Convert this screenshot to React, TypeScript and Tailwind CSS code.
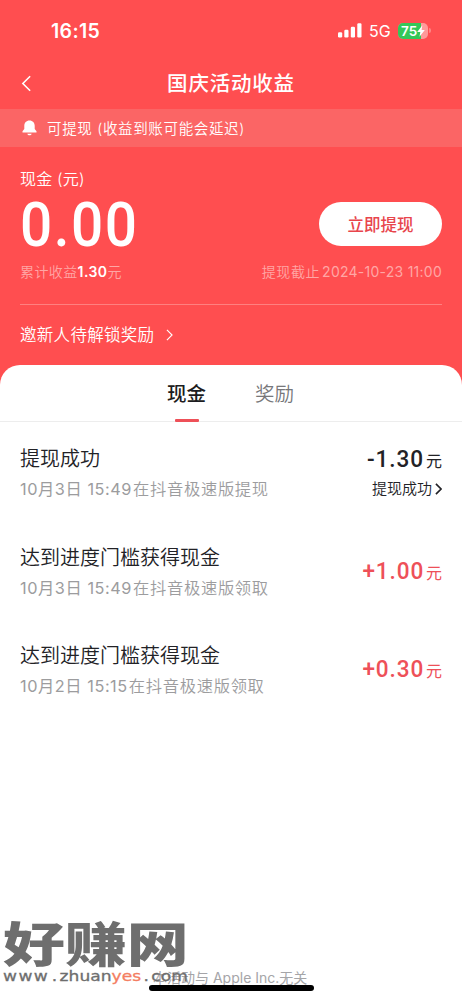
import React from 'react';

type RowProps = {
  title: string;
  date: string;
  note: string;
  amount: string;
  amountClass: string;
  status?: string;
};

function Chevron({ className, width = 2 }: { className: string; width?: number }) {
  return (
    <svg viewBox="0 0 8 14" className={className} fill="none" stroke="currentColor" strokeWidth={width}>
      <path d="M1 1l6 6-6 6" />
    </svg>
  );
}

function StatusBar() {
  return (
    <div className="flex h-[61px] items-center justify-between pl-[51px] pr-[31px]">
      <span className="text-[19.5px] font-semibold leading-[24px] tracking-[0.35px]">16:15</span>
      <div className="flex h-[24px] items-center">
        <svg viewBox="0 0 24 15" className="h-[15px] w-[24px]" fill="currentColor">
          <rect x="0" y="9.3" width="4.2" height="5.2" rx="1.2" />
          <rect x="6.3" y="6.8" width="4.2" height="7.7" rx="1.2" />
          <rect x="12.8" y="3.8" width="4.2" height="10.7" rx="1.2" />
          <rect x="19.3" y="0.2" width="4.2" height="14.3" rx="1.2" />
        </svg>
        <span className="ml-[7px] w-[29px] text-[16px] font-normal leading-[24px]">5G</span>
        <div className="relative flex h-[16px] w-[30px] items-center overflow-hidden rounded-[5px] bg-[#ff9a9a]">
          <div className="absolute left-0 top-0 h-[16px] w-[23px] bg-[#34c759]" />
          <span className="relative pl-[3px] text-[13.5px] font-semibold leading-[16px]">75</span>
          <svg viewBox="0 0 8 12" className="relative h-[12px] w-[8px]" fill="currentColor">
            <path d="M5.4 0.3L0.2 6.9h3.1L2.5 11.7l5.3-6.8H4.6z" />
          </svg>
        </div>
        <div className="ml-[1px] h-[5px] w-[2px] rounded-r-full bg-[#ff8585]" />
      </div>
    </div>
  );
}

function Row({ title, date, note, amount, amountClass, status }: RowProps) {
  return (
    <div className="flex h-[98.5px] justify-between">
      <div>
        <div className="pt-[2px] text-[20px] leading-[30px] text-[#222226]">{title}</div>
        <div className="mt-px flex text-[16.3px] leading-[28px] text-[#9c9c9e]">
          <span className="font-normal tracking-[0.55px]">{date}</span>
          <span className="ml-[1px] tracking-[0.7px]">{note}</span>
        </div>
      </div>
      <div className={status ? 'flex flex-col items-end' : 'flex flex-col items-end pt-[13px]'}>
        <div className={amountClass}>
          <span className="inline-block origin-right scale-x-[0.92] font-[Roboto] text-[24.5px] font-medium tracking-[1px]">
            {amount}
          </span>
          <span className="ml-[2px] text-[16px] font-normal">元</span>
        </div>
        {status && (
          <div className="flex items-center text-[15px] leading-[28px] text-[#222226]">
            {status}
            <Chevron className="ml-[3px] h-[12px] w-[7px]" width={1.9} />
          </div>
        )}
      </div>
    </div>
  );
}

export default function App() {
  return (
    <div className="flex h-[1000px] w-[462px] flex-col overflow-hidden whitespace-nowrap bg-[#ff4e50] font-[Inter,'Noto_Sans_CJK_SC',sans-serif] font-[350] text-white">
      <StatusBar />
      <div className="grid h-[48px] grid-cols-[1fr_auto_1fr] items-center px-[21px] pb-[3px]">
        <Chevron className="h-[17px] w-[11px] rotate-180" width={1.3} />
        <h1 className="pt-px text-[20.5px] font-medium leading-[30px] tracking-[0.8px]">国庆活动收益</h1>
      </div>
      <div className="flex h-[38px] items-center bg-[#fb6565] pl-[22px]">
        <svg viewBox="0 0 15 16" className="h-[16px] w-[15px]" fill="currentColor">
          <path d="M7.5 0.5C4.3 0.5 2.3 2.8 2.3 5.8v3.3L0.5 11.3v1.2h14v-1.2l-1.8-2.2V5.8c0-3-2-5.3-5.2-5.3zM5.3 13.7c.4 1 1.2 1.6 2.2 1.6s1.8-.6 2.2-1.6z" />
        </svg>
        <span className="ml-[10px] pt-px text-[14.5px] leading-[22px] tracking-[0.65px]">可提现 (收益到账可能会延迟)</span>
      </div>

      <section className="flex h-[218px] shrink-0 flex-col px-[20px]">
        <div className="mt-[20px] text-[16px] leading-[24px] tracking-[0.2px]">现金 (元)</div>
        <div className="flex h-[68px] items-center justify-between">
          <span className="origin-left scale-x-[0.93] font-[Roboto] text-[61px] font-medium leading-[68px] tracking-[1.6px]">
            0.00
          </span>
          <button className="mb-[2px] h-[44px] w-[123px] rounded-full bg-white pt-px text-[16.5px] font-medium leading-[24px] text-[#e8454c]">
            立即提现
          </button>
        </div>
        <div className="mt-[1px] flex justify-between text-[14px] leading-[24px] text-[#ffa6a5]">
          <span className="tracking-[0.4px]">
            累计收益<b className="font-semibold text-white">1.30</b>元
          </span>
          <span className="flex">
            <span className="tracking-[0.6px]">提现截止</span>
            <span className="ml-[2px] font-normal tracking-[0.25px]">2024-10-23 11:00</span>
          </span>
        </div>
        <div className="mt-[20px] h-px shrink-0 bg-[#ff8080]" />
        <div className="mt-[18px] flex items-center text-[16.5px] leading-[24px] tracking-[0.3px]">
          邀新人待解锁奖励
          <Chevron className="ml-[12px] h-[12px] w-[7px]" width={1.3} />
        </div>
      </section>

      <main className="flex flex-1 flex-col rounded-t-[20px] bg-white">
        <nav className="flex h-[57px] shrink-0 border-b border-[#ededed] pl-[167px] text-[19.5px] leading-[58px]">
          <div className="relative font-medium text-[#1c1c20]">
            现金
            <div className="absolute -bottom-px left-[8px] h-[3px] w-[24px] rounded-[1px] bg-[#ee5058]" />
          </div>
          <div className="ml-[49px] text-[#77777a]">奖励</div>
        </nav>
        <div className="px-[20px] pt-[20px]">
          <Row
            title="提现成功"
            date="10月3日 15:49"
            note="在抖音极速版提现"
            amount="-1.30"
            amountClass="h-[33px] leading-[34px] text-[#222226]"
            status="提现成功"
          />
          <Row
            title="达到进度门槛获得现金"
            date="10月3日 15:49"
            note="在抖音极速版领取"
            amount="+1.00"
            amountClass="leading-[34px] text-[#ee5058]"
          />
          <Row
            title="达到进度门槛获得现金"
            date="10月2日 15:15"
            note="在抖音极速版领取"
            amount="+0.30"
            amountClass="leading-[34px] text-[#ee5058]"
          />
        </div>
        <footer className="relative mt-auto h-[84px]">
          <div className="pl-[153px] pt-[51px] text-[14px] font-normal leading-[22px] text-[#a5a5a8]">
            本活动与 Apple Inc.无关
          </div>
          <div className="absolute left-[149px] top-[69px] h-[6px] w-[165px] rounded-full bg-black" />
          <div className="absolute left-[3px] top-[5px] text-[#6e6e6e]">
            <div className="text-[48px] font-black leading-[48px]">
              <span className="inline-block origin-left scale-x-[1.29]">好赚网</span>
            </div>
            <div className="-mt-px origin-left scale-x-[1.22] font-['DejaVu_Sans'] text-[14px] font-normal leading-[16px] [-webkit-text-stroke:0.3px_currentColor]">
              <span className="tracking-[1.2px]">www</span>
              <span className="mx-[2px]">.</span>
              <span>zhuan</span>
              <span className="text-[#f47e62]">yes</span>
              <span className="mx-[2px]">.</span>
              <span>com</span>
            </div>
          </div>
        </footer>
      </main>
    </div>
  );
}
